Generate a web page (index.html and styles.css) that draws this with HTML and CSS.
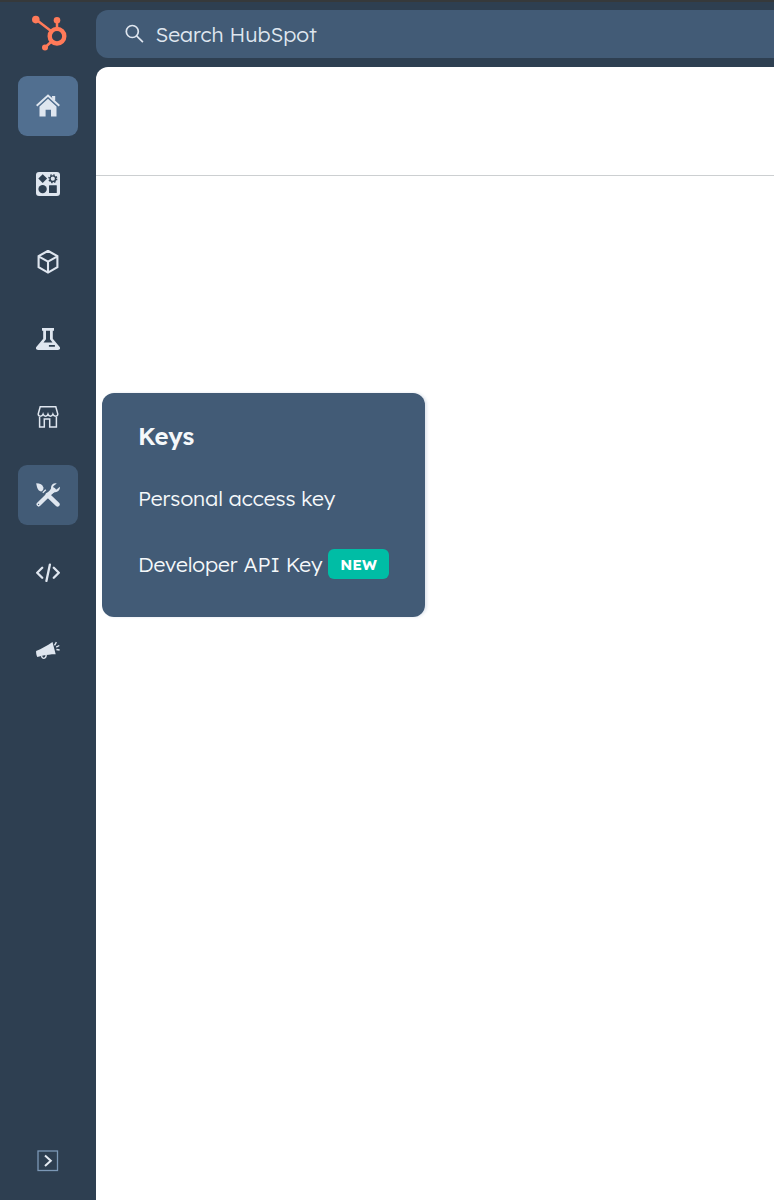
FILE: index.html
```html
<!DOCTYPE html>
<html lang="en">
<head>
<meta charset="utf-8">
<title>HubSpot</title>
<link rel="stylesheet" href="styles.css">
</head>
<body>
<div class="app">
  <aside class="sidebar">
    <a class="logo" aria-label="HubSpot">
      <svg width="60" height="54" viewBox="0 0 60 54" fill="none" stroke="#ff7a59">
        <circle cx="37" cy="30.2" r="7.3" stroke-width="4.4"/>
        <path d="M37 13.8V22M16 13.500L31 25M31.500 35.500L25 41.500" stroke-width="2.500"/>
        <g fill="#ff7a59" stroke="none"><circle cx="15.800" cy="13.600" r="3.800"/><circle cx="37" cy="14.300" r="3.300"/><circle cx="25" cy="41.500" r="3"/></g>
      </svg>
    </a>
    <nav class="nav">
      <a class="item active" aria-label="Home"><svg class="icon" viewBox="0 0 24 24"><path d="M3.500 12.400 12 4.800l8.500 7.600V22.500h-5.500v-6.800H9.600v6.800H3.500z"/><path d="M16 2h3.200v6L16 5z"/><path d="M.9 12 12 1.700 23.100 12" fill="none" stroke="#516f90" stroke-width="3.400"/><path d="M16.300 2h2.700v5l-2.700-2z"/><path d="M.7 11.800 12 1.500 23.300 11.800" fill="none" stroke="#dfe6ef" stroke-width="2"/></svg></a>
      <a class="item" aria-label="Apps"><svg class="icon" viewBox="0 0 24 24"><rect width="24" height="24" rx="3"/><g fill="#2e3f51"><path d="m6.700 2.200 4.400 4.400-4.400 4.400-4.400-4.400z"/><circle cx="6.600" cy="17.100" r="4.200"/><rect x="13" y="13.200" width="7.800" height="7.800" rx=".5"/></g><circle cx="16.800" cy="6.700" r="2.800" fill="none" stroke="#2e3f51" stroke-width="1.400"/><circle cx="16.800" cy="6.700" r="3.900" fill="none" stroke="#2e3f51" stroke-width="1.400" stroke-dasharray="1.500 1.563"/></svg></a>
      <a class="item" aria-label="Objects"><svg class="icon line" viewBox="0 0 24 24"><path d="M12 .8 21.400 6.200V17.200L12 22.600 2.600 17.200V6.200zM2.600 6.400 12 11.600l9.400-5.200M12 11.600v11" stroke-width="2.100"/></svg></a>
      <a class="item" aria-label="Testing"><svg class="icon" viewBox="0 0 24 24"><path fill-rule="evenodd" d="M6 1h12v2.700h-1.200v8L23.700 20c1 1.600 0 3-1.700 3H2c-1.700 0-2.700-1.400-1.700-3l6.900-8.300v-8H6zM10 3.700v8.600L7.500 15.500h9L14 12.300V3.700zM12.900 18v1.800h6V18z"/></svg></a>
      <a class="item" aria-label="Marketplace"><svg class="icon line" viewBox="0 0 24 24"><path d="M4.200 1.800h15.600l2 7.200c0 2.800-3.900 2.800-4.900.2-1 2.600-4 2.600-4.900 0-.9 2.600-3.900 2.600-4.900 0-1 2.600-4.900 2.600-4.900-.2zM3.600 12v10h4.700v-8h5.400v8h6.700V12" stroke-width="1.500"/></svg></a>
      <a class="item open" aria-label="Keys"><svg class="icon" viewBox="0 0 24 24"><path d="M.2.200C4 .3 6.700 1.600 7.300 4.300c.3 1.500 0 2.700-.9 3.500L5.200 8.400C2.500 8.300 1 5.500.200.200z"/><path d="m6.800 9.700 3-3" stroke="#dfe6ef" stroke-width="1.300"/><path d="m11.600 11.800 9.900 9.600M2.700 21.300 17.500 6.800" fill="none" stroke="#dfe6ef" stroke-width="4.400" stroke-linecap="round"/><path d="M20.700.4c-3.500-.6-6 1.600-5.700 5.200l-1.200 3 2.100 2.100 2.800-1.500c3.300.3 5.700-2.500 5.100-5.500l-3.200 2.900-2.900-.7-.5-2.700z"/><circle cx="2.600" cy="21.400" r=".6" fill="#425b76"/></svg></a>
      <a class="item" aria-label="Code"><svg class="icon line" viewBox="0 0 24 24"><path d="M6.200 6.700 1.200 11.700l5 5M17.800 6.700l5 5-5 5M13.900 3.600 10.400 19.900" stroke-width="2.300" stroke-linecap="round" stroke-linejoin="round"/></svg></a>
      <a class="item" aria-label="Campaigns"><svg class="icon" viewBox="0 0 24 24"><g transform="translate(0 -.7)"><path d="M16.500 3.800 19.700 16c-4-.1-8.500.5-12.500 1.300L1.300 18.600C.3 17 0 14.800.1 12.800 5.600 10.800 11 7.400 16.500 3.800z"/><path d="M5.600 17.500c.3 3.600 4.500 3.400 4.600-.7M18.500 7l1.900-3.200M20.200 8.800l3.100-1.600M20.400 11.200l3.200.5" fill="none" stroke="#dfe6ef" stroke-width="1.400"/></g></svg></a>
    </nav>
    <button class="expand" aria-label="Expand"><svg width="22" height="22" viewBox="0 0 22 22" fill="none"><rect x="1" y="1" width="19.500" height="19.500" stroke="#7c98b6" stroke-width="1.300"/><path d="m8 5.500 5.800 5.300L8 16.100" stroke="#e5ebf2" stroke-width="2"/></svg></button>
  </aside>
  <div class="content">
    <div class="search">
      <svg width="20" height="20" viewBox="0 0 20 20" fill="none" stroke="#dfe6ef" stroke-width="1.700"><circle cx="7.300" cy="7.500" r="6"/><path d="m11.600 11.900 6.300 6.200"/></svg>
      <span class="search-text">Search HubSpot</span>
    </div>
    <main class="page"><header class="page-header"></header></main>
  </div>
  <section class="flyout">
    <h2 class="title">Keys</h2>
    <a class="link personal">Personal access key</a>
    <a class="link"><span class="developer">Developer API Key</span><span class="badge">NEW</span></a>
  </section>
</div>
</body>
</html>
```
FILE: styles.css
```css
* { box-sizing: border-box; }
body {
  margin: 0;
  font-family: Lexend, Inter, "Liberation Sans", sans-serif;
  font-weight: 300;
  color: #f5f8fa;
}
.app {
  position: relative;
  display: flex;
  height: 1200px;
  overflow: hidden;
  background: #2e3f51;
  border-top: 2px solid #36393b;
}
.sidebar {
  width: 96px;
  display: flex;
  flex-direction: column;
  align-items: center;
  padding: 4px 0 28px;
}
.logo { display: block; width: 56px; height: 70px; }
.logo svg { display: block; }
.nav { display: flex; flex-direction: column; gap: 17.8px; }
.item {
  width: 60px;
  height: 60px;
  border-radius: 9px;
  display: flex;
  align-items: center;
  justify-content: center;
}
.active { background: #516f90; }
.open { background: #425b76; }
.icon { width: 24px; height: 24px; fill: #dfe6ef; }
.line { fill: none; stroke: #dfe6ef; }
.expand {
  margin-top: auto;
  padding: 0;
  border: 0;
  background: none;
  height: 22px;
}
.expand svg { display: block; }
.content { flex: 1; display: flex; flex-direction: column; padding-top: 8px; }
.search {
  height: 48px;
  margin-bottom: 9px;
  padding-left: 29px;
  display: flex;
  align-items: center;
  gap: 10.5px;
  background: #425b76;
  border-radius: 12px 0 0 12px;
}
.search-text { font-size: 21px; color: #dfe6ef; white-space: nowrap; padding-bottom: 1px; }
.page { flex: 1; background: #fff; border-radius: 12px 0 0 0; }
.page-header { height: 109px; border-bottom: 1px solid #cccfd1; }
.flyout {
  position: absolute;
  left: 102px;
  top: 391px;
  width: 323px;
  height: 224px;
  padding: 27px 36px;
  border-radius: 12px;
  background: #425b76;
  box-shadow: 2px 0 3px #cbd6e299;
}
.title { margin: 0; font-size: 24px; line-height: 32px; font-weight: 600; letter-spacing: -.1px; }
.link {
  display: flex;
  align-items: center;
  height: 30px;
  margin-top: 36px;
  font-size: 21px;
  letter-spacing: -.04px;
  white-space: nowrap;
}
.title + .link { margin-top: 31px; }
.developer { width: 190px; }
.badge {
  width: 61px;
  height: 30px;
  border-radius: 6px;
  background: #00bda5;
  color: #fff;
  font-size: 15px;
  font-weight: 700;
  line-height: 31px;
  text-align: center;
}
```
